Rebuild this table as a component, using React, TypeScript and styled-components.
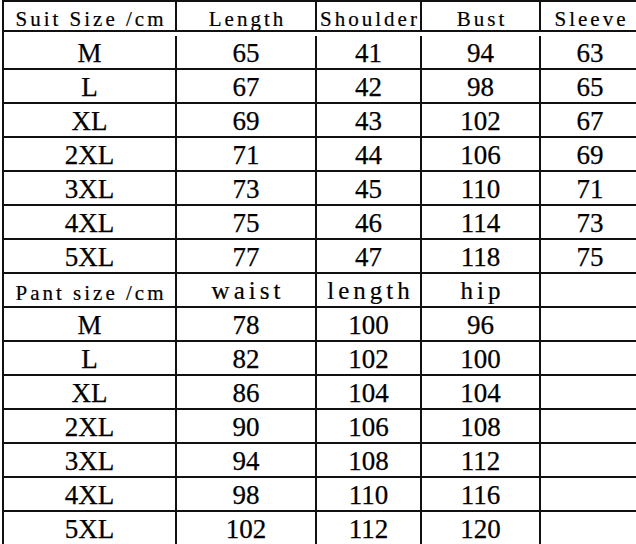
import React from "react";
import styled, { createGlobalStyle } from "styled-components";

// Suit and pant measurements, one array per row
const suitHeader = ["Suit Size /cm", "Length", "Shoulder", "Bust", "Sleeve"];
const suitRows = [
  ["M", "65", "41", "94", "63"],
  ["L", "67", "42", "98", "65"],
  ["XL", "69", "43", "102", "67"],
  ["2XL", "71", "44", "106", "69"],
  ["3XL", "73", "45", "110", "71"],
  ["4XL", "75", "46", "114", "73"],
  ["5XL", "77", "47", "118", "75"],
];

const pantHeader = ["Pant size /cm", "waist", "length", "hip", ""];
const pantRows = [
  ["M", "78", "100", "96", ""],
  ["L", "82", "102", "100", ""],
  ["XL", "86", "104", "104", ""],
  ["2XL", "90", "106", "108", ""],
  ["3XL", "94", "108", "112", ""],
  ["4XL", "98", "110", "116", ""],
  ["5XL", "102", "112", "120", ""],
];

const App: React.FC = () => {
  return (
    <>
      <GlobalStyle />
      <Page>
        <SizeGrid>
          {suitHeader.map((h, i) => (
            <HeaderCell key={"sh" + i} $first>
              {h}
            </HeaderCell>
          ))}
          {suitRows.map((row, r) =>
            row.map((v, i) => <DataCell key={`s${r}-${i}`}>{v}</DataCell>)
          )}
          {pantHeader.map((h, i) => (
            <HeaderCell key={"ph" + i} $large={i > 0}>
              {h}
            </HeaderCell>
          ))}
          {pantRows.map((row, r) =>
            row.map((v, i) => <DataCell key={`p${r}-${i}`}>{v}</DataCell>)
          )}
        </SizeGrid>
      </Page>
    </>
  );
};

const GlobalStyle = createGlobalStyle`
  html, body {
    margin: 0;
    padding: 0;
    background: #ffffff;
  }
`;

const Page = styled.div`
  width: 636px;
  height: 544px;
  overflow: hidden;
  background: #ffffff;
  padding-left: 2px;
  box-sizing: border-box;
`;

const SizeGrid = styled.div`
  display: grid;
  grid-template-columns: 173px 140px 105px 119px 100px;
  grid-auto-rows: 34px;
  width: max-content;
  border-top: 2px solid #111;
  border-left: 2px solid #111;
  color: #000;
`;

const Cell = styled.div`
  box-sizing: border-box;
  border-right: 2px solid #111;
  border-bottom: 2px solid #111;
  display: flex;
  align-items: center;
  justify-content: center;
  white-space: nowrap;
`;

// headers are set in a spaced-out serif, like the half-width SimSun of the source
const HeaderCell = styled(Cell)<{ $first?: boolean; $large?: boolean }>`
  height: ${(p) => (p.$first ? "30px" : "34px")};
  font-family: "Liberation Serif", "Times New Roman", serif;
  font-size: ${(p) => (p.$large ? "25px" : "21px")};
  letter-spacing: ${(p) => (p.$large ? "4px" : "3px")};
  padding-left: ${(p) => (p.$large ? "4px" : "3px")};
  padding-top: ${(p) => (p.$large ? "1px" : "6px")};
  -webkit-text-stroke: 0.2px #000;
`;

const DataCell = styled(Cell)`
  height: 34px;
  font-family: "Liberation Serif", "Times New Roman", serif;
  font-size: 27px;
  padding-top: 3px;
  -webkit-text-stroke: 0.25px #000;
`;

export default App;
